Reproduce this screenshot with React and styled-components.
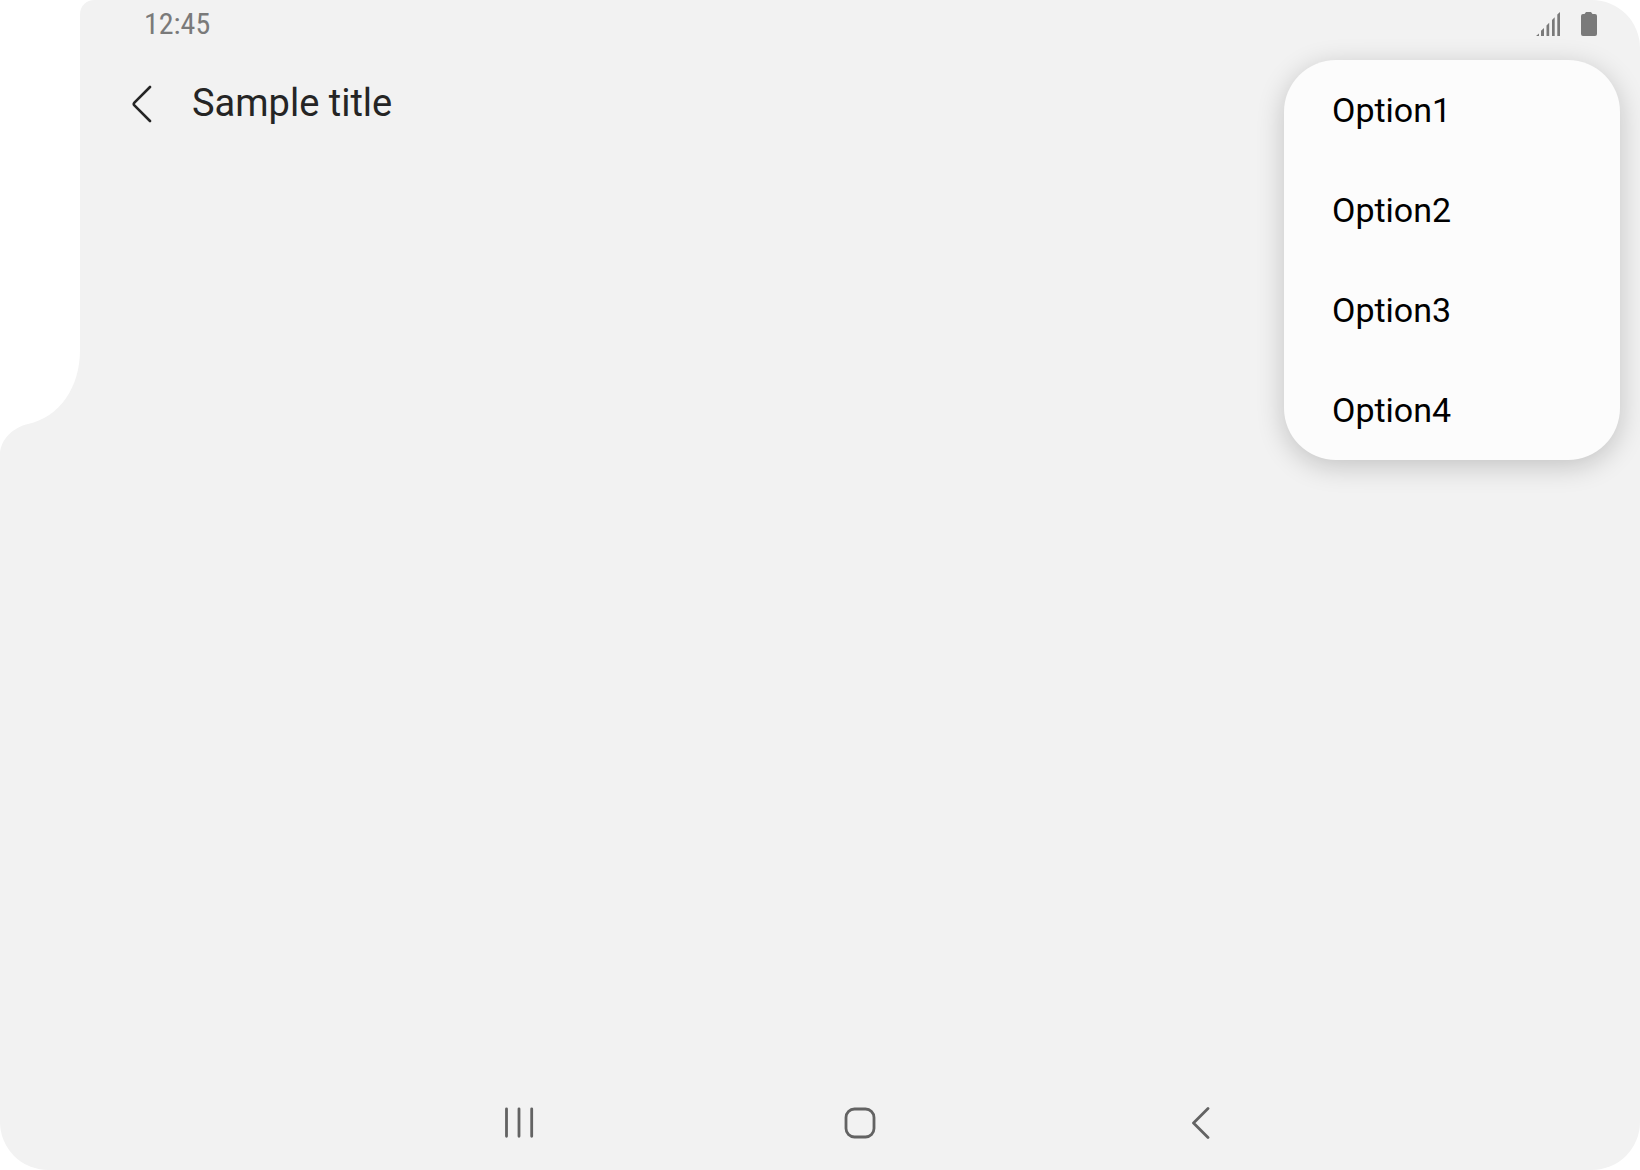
import React from "react";
import styled, { createGlobalStyle } from "styled-components";

const GlobalStyle = createGlobalStyle`
  *, *::before, *::after { box-sizing: border-box; }
  body {
    margin: 0;
    background: #ffffff;
    font-family: Roboto, "Noto Sans", sans-serif;
  }
`;

const Screen = styled.div`
  position: relative;
  display: flex;
  flex-direction: column;
  min-height: 100vh;
  padding-left: 80px;
  overflow: hidden;
  background: #f2f2f2;
  border-radius: 0 48px 48px 48px;
`;

const Cutout = styled.svg`
  position: absolute;
  top: 0;
  left: 0;
  fill: #ffffff;
`;

const StatusBar = styled.div`
  display: flex;
  align-items: center;
  justify-content: space-between;
  height: 48px;
  padding: 0 43px 0 64px;
  color: #7a7a7a;
`;

const Clock = styled.time`
  font-family: "Roboto Condensed", Roboto, sans-serif;
  font-size: 30px;
  line-height: 36px;
`;

const StatusIcons = styled.div`
  display: flex;
  gap: 20px;

  svg {
    display: block;
    fill: currentColor;
  }
`;

const Header = styled.header`
  display: flex;
  align-items: center;
  gap: 20px;
  height: 110px;
  padding-left: 42px;
`;

const IconButton = styled.button`
  display: grid;
  place-items: center;
  width: ${(p) => p.$size}px;
  height: ${(p) => p.$size}px;
  padding: 0;
  border: 0;
  background: none;
  color: ${(p) => p.$color};
  cursor: pointer;

  svg {
    display: block;
    fill: none;
    stroke: currentColor;
    stroke-linecap: round;
    stroke-linejoin: round;
  }
`;

const Title = styled.h1`
  margin: 0;
  color: #252525;
  font-size: 38px;
  font-weight: 400;
  line-height: 48px;
`;

const Content = styled.main`
  flex: 1;
`;

const Menu = styled.ul`
  position: absolute;
  top: 60px;
  right: 20px;
  width: 336px;
  margin: 0;
  padding: 0;
  overflow: hidden;
  list-style: none;
  background: #fcfcfc;
  border-radius: 52px;
  box-shadow: 0 6px 28px rgba(0, 0, 0, 0.2);
`;

const MenuItem = styled.button`
  display: block;
  width: 100%;
  height: 100px;
  padding: 0 48px;
  border: 0;
  background: none;
  color: #000000;
  font-family: inherit;
  font-size: 34px;
  line-height: 40px;
  text-align: left;
  cursor: pointer;
`;

const NavBar = styled.nav`
  display: grid;
  grid-template-columns: repeat(3, 1fr);
  justify-items: center;
  align-items: center;
  width: 100%;
  max-width: 1024px;
  height: 94px;
  margin: 0 auto;
`;

const options = ["Option1", "Option2", "Option3", "Option4"];

export default function App() {
  return (
    <>
      <GlobalStyle />
      <Screen>
        <Cutout width="96" height="460" viewBox="0 0 96 460" aria-hidden="true">
          <path d="M0 0H95C86 0 80 6 80 15V350C80 387 60 417 28 424C12 428 0 440 0 455Z" />
        </Cutout>

        <StatusBar>
          <Clock>12:45</Clock>
          <StatusIcons>
            <svg width="26" height="24" viewBox="0 0 26 24" aria-hidden="true">
              <path d="M2 24L5 21.500V24ZM7 18.800L10 16V24H7ZM12.500 13.500L15.200 10.700V24H12.500ZM18 8L20.700 5.300V24H18ZM23.300 2.500L26 0V24H23.300Z" />
            </svg>
            <svg width="17" height="24" viewBox="0 0 17 24" aria-hidden="true">
              <path d="M4.500 2L6 0H11L12.500 2H15Q17 2 17 4V22Q17 24 15 24H3Q1 24 1 22V4Q1 2 3 2Z" />
            </svg>
          </StatusIcons>
        </StatusBar>

        <Header>
          <IconButton type="button" aria-label="Navigate up" $size={50} $color="#252525">
            <svg width="30" height="40" viewBox="0 0 30 40" strokeWidth="2.600">
              <path d="M18 4L2.400 19.600Q1.100 21 2.400 22.400L18 38" />
            </svg>
          </IconButton>
          <Title>Sample title</Title>
        </Header>

        <Content />

        <Menu>
          {options.map((option) => (
            <li key={option}>
              <MenuItem type="button">{option}</MenuItem>
            </li>
          ))}
        </Menu>

        <NavBar aria-label="System navigation">
          <IconButton type="button" aria-label="Recent apps" $size={60} $color="#636363">
            <svg width="32" height="32" viewBox="0 0 32 32" strokeWidth="2.800">
              <path d="M3.500 1.800V29.300M16 1.800V29.300M28.700 1.800V29.300" />
            </svg>
          </IconButton>
          <IconButton type="button" aria-label="Home" $size={60} $color="#636363">
            <svg width="32" height="32" viewBox="0 0 32 32" strokeWidth="2.800">
              <rect x="2" y="2" width="28" height="28" rx="8.500" />
            </svg>
          </IconButton>
          <IconButton type="button" aria-label="Back" $size={60} $color="#636363">
            <svg width="32" height="32" viewBox="0 0 32 32" strokeWidth="2.800">
              <path d="M23 1.500L8.500 16L23 30.500" />
            </svg>
          </IconButton>
        </NavBar>
      </Screen>
    </>
  );
}
